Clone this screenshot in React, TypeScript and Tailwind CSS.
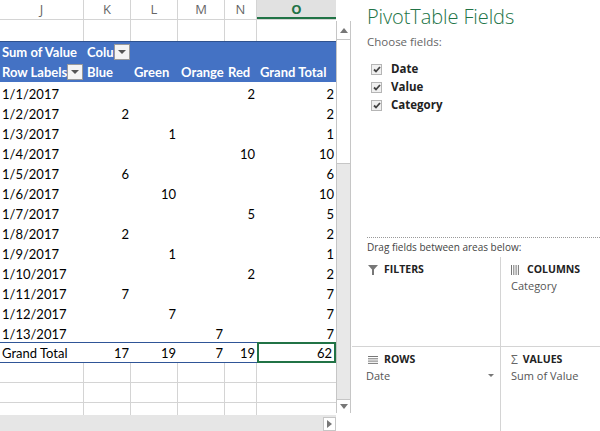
import React from 'react';

const COLS = ['w-[84px]', 'w-[47px]', 'w-[47px]', 'w-[47px]', 'w-[32px]', 'w-[79px]'];
const LETTERS = ['J', 'K', 'L', 'M', 'N', 'O'];

const ROWS: (string | number)[][] = [
  ['1/1/2017', '', '', '', 2, 2],
  ['1/2/2017', 2, '', '', '', 2],
  ['1/3/2017', '', 1, '', '', 1],
  ['1/4/2017', '', '', '', 10, 10],
  ['1/5/2017', 6, '', '', '', 6],
  ['1/6/2017', '', 10, '', '', 10],
  ['1/7/2017', '', '', '', 5, 5],
  ['1/8/2017', 2, '', '', '', 2],
  ['1/9/2017', '', 1, '', '', 1],
  ['1/10/2017', '', '', '', 2, 2],
  ['1/11/2017', 7, '', '', '', 7],
  ['1/12/2017', '', 7, '', '', 7],
  ['1/13/2017', '', '', 7, '', 7],
];

const cellFont = { fontFamily: 'Lato, "Liberation Sans", sans-serif' };
const uiFont = { fontFamily: '"Open Sans", "Noto Sans", sans-serif' };

function DropBtn() {
  return (
    <div className="w-[16px] h-[16px] bg-[#f4f4f4] border border-[#9a9a9a] flex items-center justify-center shrink-0">
      <svg width="8" height="5" viewBox="0 0 8 5">
        <path d="M0 0 L8 0 L4 4 Z" fill="#555" />
      </svg>
    </div>
  );
}

function Check() {
  return (
    <div className="w-[11px] h-[11px] bg-[#f0f0f0] border border-[#b5b5b5] flex items-center justify-center">
      <svg width="8" height="7" viewBox="0 0 8 7">
        <path d="M1 3.5 L3 5.5 L7 1" stroke="#444" strokeWidth="1.8" fill="none" />
      </svg>
    </div>
  );
}

export default function App() {
  return (
    <div className="flex w-[600px] h-[431px] bg-white overflow-hidden text-black">
      {/* sheet */}
      <div className="w-[352px] flex flex-col shrink-0">
        <div className="flex flex-1 min-h-0">
          <div className="w-[336px] flex flex-col shrink-0 text-[13px]" style={cellFont}>
            {/* column letters */}
            <div className="flex h-[20px] border-b border-[#d4d4d4]" style={uiFont}>
              {LETTERS.map((l, i) =>
                l === 'O' ? (
                  <div
                    key={l}
                    className={`${COLS[i]} bg-[#e1e1e1] border-b-2 border-[#217346] text-[#217346] font-bold text-[13px] leading-[18px] text-center`}
                  >
                    {l}
                  </div>
                ) : (
                  <div
                    key={l}
                    className={`${COLS[i]} border-r border-[#d4d4d4] text-[#666] text-[13px] leading-[19px] text-center`}
                  >
                    {l}
                  </div>
                )
              )}
            </div>
            {/* blank row */}
            <div className="flex h-[21px]">
              {COLS.map((c, i) => (
                <div key={i} className={`${c} ${i < 5 ? 'border-r border-[#d4d4d4]' : ''}`} />
              ))}
            </div>
            {/* pivot header */}
            <div className="bg-[#4472c4] border-t border-[#2f528f] text-white font-bold">
              <div className="flex h-[20px] items-center">
                <div className="w-[84px] pl-[2px] leading-[20px] whitespace-nowrap">Sum of Value</div>
                <div className="w-[47px] pl-[3px] flex items-center">
                  <span className="w-[27px] overflow-hidden whitespace-nowrap leading-[20px]">Colu</span>
                  <DropBtn />
                </div>
              </div>
              <div className="flex h-[20px] items-center">
                <div className="w-[84px] pl-[2px] pr-[1px] flex items-center justify-between">
                  <span className="leading-[20px] whitespace-nowrap">Row Labels</span>
                  <DropBtn />
                </div>
                {['Blue', 'Green', 'Orange', 'Red', 'Grand Total'].map((t, i) => (
                  <div key={t} className={`${COLS[i + 1]} pl-[3px] leading-[20px] whitespace-nowrap`}>
                    {t}
                  </div>
                ))}
              </div>
            </div>
            {/* data */}
            {ROWS.map((r, ri) => (
              <div key={ri} className="flex h-[20px]">
                {r.map((v, ci) => (
                  <div
                    key={ci}
                    className={`${COLS[ci]} ${ci === 0 ? 'pl-[2px] text-left' : 'pr-[2px] text-right'} pt-[2px] leading-[20px] whitespace-nowrap`}
                  >
                    {v}
                  </div>
                ))}
              </div>
            ))}
            {/* grand total */}
            <div className="flex h-[21px] border-y border-[#2f5597]">
              {['Grand Total', 17, 19, 7, 19].map((v, ci) => (
                <div
                  key={ci}
                  className={`${COLS[ci]} ${ci === 0 ? 'pl-[2px] text-left' : 'pr-[2px] text-right'} pt-[1px] leading-[19px]`}
                >
                  {v}
                </div>
              ))}
              <div className="w-[79px] -my-px h-[21px] border-2 border-[#217346] text-right pr-[2px] leading-[18px]">62</div>
            </div>
            {/* filler rows */}
            {[0, 1, 2].map((k) => (
              <div key={k} className={`flex ${k < 2 ? 'h-[20px] border-b border-[#d4d4d4]' : 'flex-1'}`}>
                {COLS.map((c, i) => (
                  <div key={i} className={`${c} ${i < 5 ? 'border-r border-[#d4d4d4]' : ''}`} />
                ))}
              </div>
            ))}
          </div>
          {/* vertical scrollbar */}
          <div className="w-[15px] flex flex-col pt-[21px] pb-[2px]">
            <div className="flex-1 flex flex-col border-x border-[#c6c6c6] bg-[#e8e8e8]">
              <div className="h-[19px] bg-white border-b border-[#c6c6c6] flex items-center justify-center">
                <svg width="8" height="5" viewBox="0 0 8 5">
                  <path d="M0 5 L8 5 L4 0 Z" fill="#777" />
                </svg>
              </div>
              <div className="h-[124px] bg-white border-b border-[#c6c6c6]" />
              <div className="flex-1" />
              <div className="h-[14px] bg-white border-t border-[#c6c6c6] flex items-center justify-center">
                <svg width="8" height="5" viewBox="0 0 8 5">
                  <path d="M0 0 L8 0 L4 5 Z" fill="#777" />
                </svg>
              </div>
            </div>
          </div>
        </div>
        {/* horizontal scrollbar */}
        <div className="h-[16px] flex">
          <div className="w-[336px] bg-[#e6e6e6] flex justify-end items-end">
            <div className="w-[13px] h-[14px] bg-white border border-[#c6c6c6] flex items-center justify-center">
              <svg width="5" height="8" viewBox="0 0 5 8">
                <path d="M0 0 L5 4 L0 8 Z" fill="#777" />
              </svg>
            </div>
          </div>
          <div className="flex-1 bg-white" />
        </div>
      </div>

      {/* pivot pane */}
      <div className="flex-1 flex flex-col text-[#333]" style={uiFont}>
        <div className="pl-[15px] pt-[3px] text-[20px] leading-[28px] font-light text-[#217346] tracking-[-0.1px]">PivotTable Fields</div>
        <div className="pl-[15px] text-[11.5px] leading-[16px] text-[#666] mt-[3px]">Choose fields:</div>
        <div className="pl-[19px] mt-[10px] flex flex-col">
          {['Date', 'Value', 'Category'].map((f) => (
            <div key={f} className="flex items-center h-[18px] gap-[9px]">
              <Check />
              <span className="text-[11.5px] font-bold text-[#222]">{f}</span>
            </div>
          ))}
        </div>
        <div className="ml-[15px] mt-[123px] border-t border-dotted border-[#999] h-0" />
        <div className="pl-[15px] text-[10px] leading-[16px] text-[#444] mt-[1px]">Drag fields between areas below:</div>
        <div className="flex-1 mt-[2px] grid grid-cols-[149px_1fr] grid-rows-[90px_1fr]">
          <div className="border-r border-b border-[#d4d4d4] pl-[16px] pt-[5px]">
            <div className="flex items-center gap-[6px] h-[16px]">
              <svg width="10" height="10" viewBox="0 0 10 10">
                <path d="M0 0 H10 L6 4.5 V10 H4 V4.5 Z" fill="#777" />
              </svg>
              <span className="text-[10.5px] font-bold text-[#222]">FILTERS</span>
            </div>
          </div>
          <div className="border-b border-[#d4d4d4] pl-[10px] pt-[5px]">
            <div className="flex items-center gap-[8px] h-[16px]">
              <svg width="8" height="10" viewBox="0 0 8 10">
                <path d="M0.5 0 V10 M2.8 0 V10 M5.1 0 V10 M7.4 0 V10" stroke="#777" strokeWidth="1" />
              </svg>
              <span className="text-[10.5px] font-bold text-[#222]">COLUMNS</span>
            </div>
            <div className="text-[11px] leading-[16px] text-[#555]">Category</div>
          </div>
          <div className="border-r border-[#d4d4d4] pl-[16px] pt-[5px] pr-[6px]">
            <div className="flex items-center gap-[6px] h-[16px]">
              <svg width="10" height="8" viewBox="0 0 10 8">
                <path d="M0 0.5 H10 M0 2.8 H10 M0 5.1 H10 M0 7.4 H10" stroke="#777" strokeWidth="1" />
              </svg>
              <span className="text-[10.5px] font-bold text-[#222]">ROWS</span>
            </div>
            <div className="flex items-center justify-between -ml-[2px]">
              <span className="text-[11px] leading-[16px] text-[#555]">Date</span>
              <svg width="6" height="4" viewBox="0 0 6 4">
                <path d="M0 0 H6 L3 3 Z" fill="#777" />
              </svg>
            </div>
          </div>
          <div className="pl-[10px] pt-[5px]">
            <div className="flex items-center gap-[5px] h-[16px]">
              <span className="text-[12px] leading-[16px] text-[#666]">Σ</span>
              <span className="text-[10.5px] font-bold text-[#222]">VALUES</span>
            </div>
            <div className="text-[11px] leading-[16px] text-[#555]">Sum of Value</div>
          </div>
        </div>
      </div>
    </div>
  );
}
